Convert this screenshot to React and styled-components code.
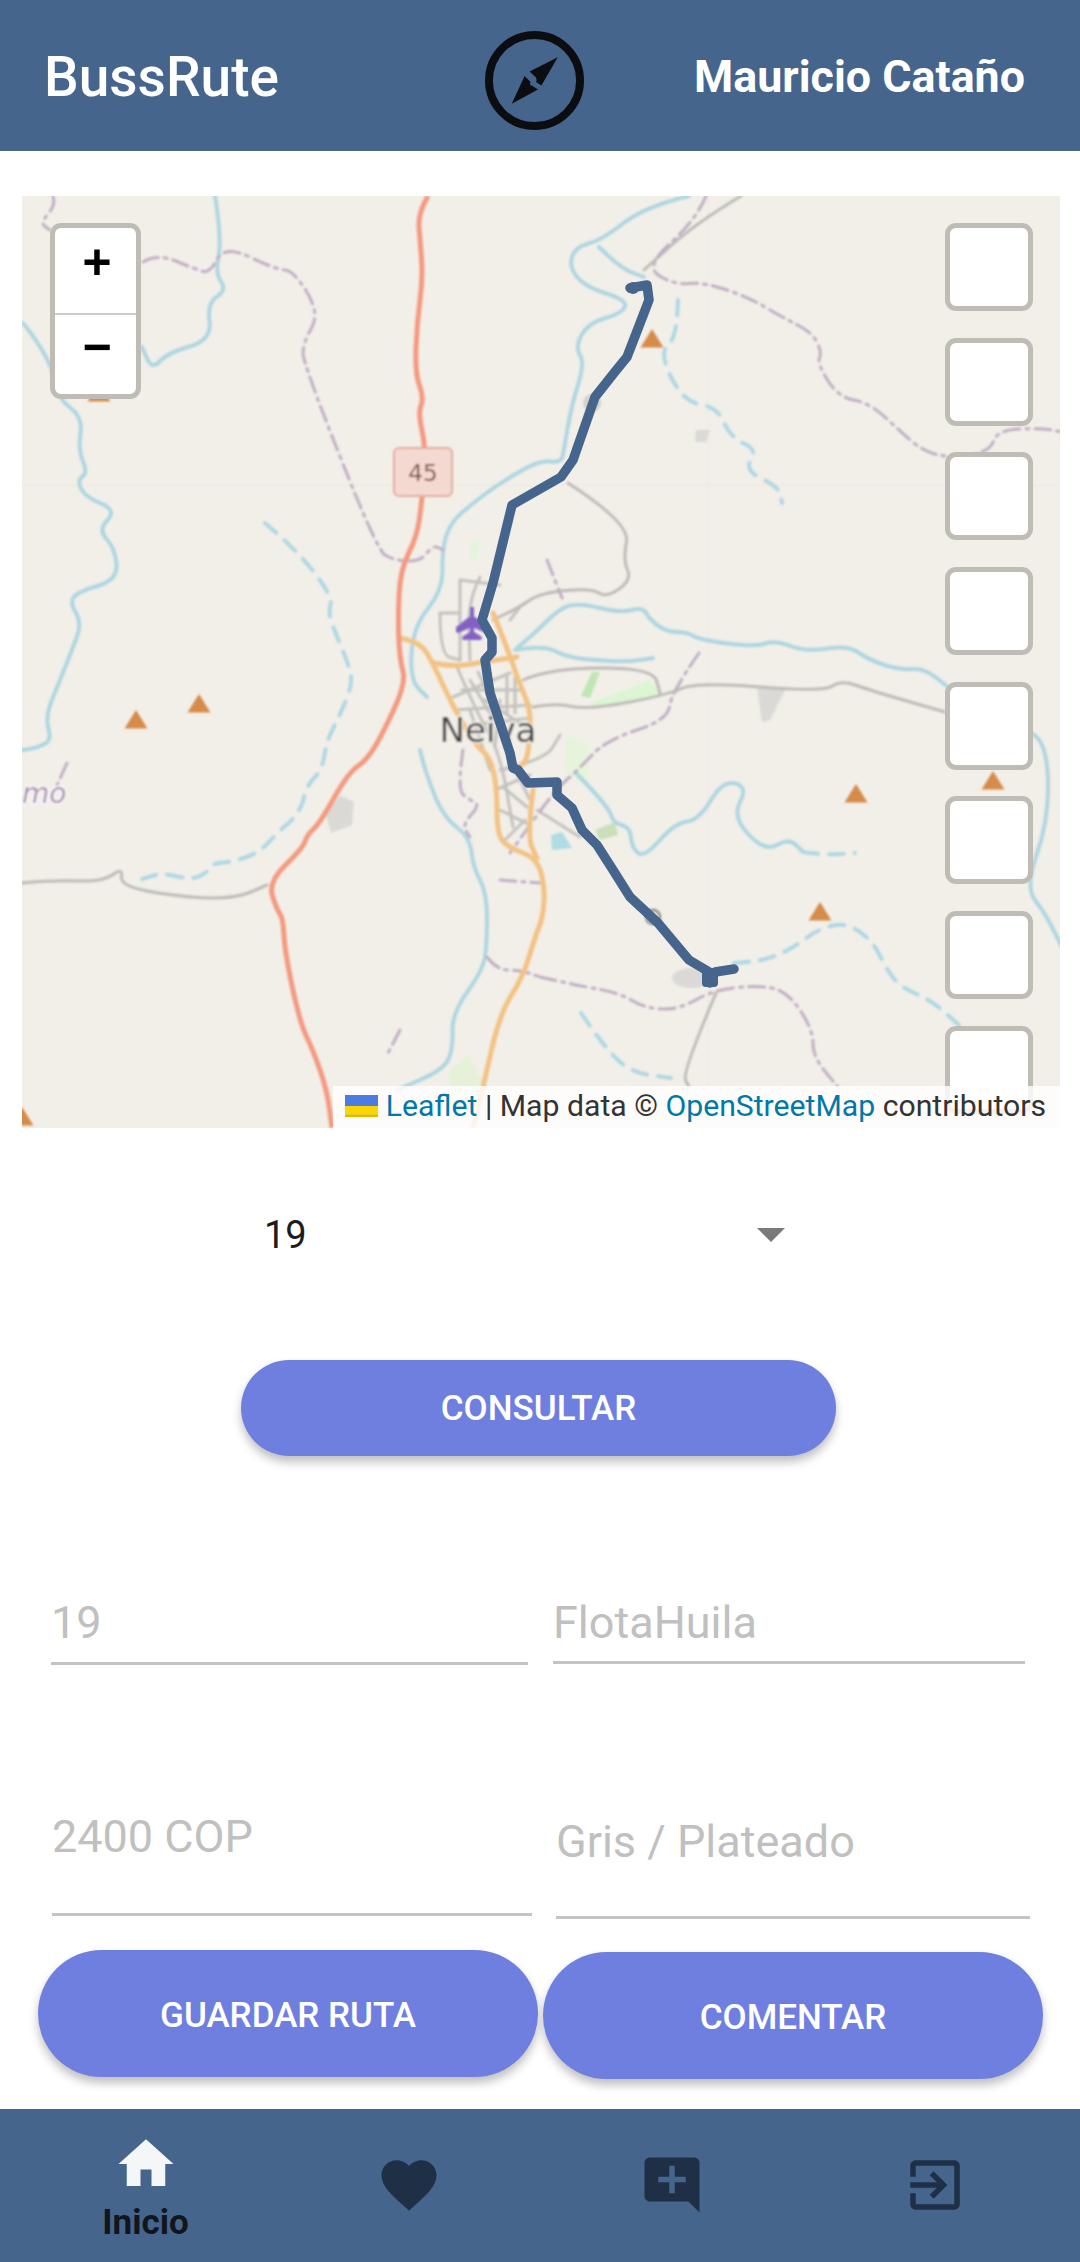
import React from 'react';
import styled, { createGlobalStyle } from 'styled-components';

const GlobalStyle = createGlobalStyle`
  html, body {
    margin: 0;
    padding: 0;
    background: #fff;
  }
  * {
    box-sizing: border-box;
  }
`;

const Page = styled.div`
  width: 1080px;
  height: 2262px;
  overflow: hidden;
  display: flex;
  flex-direction: column;
  font-family: Roboto, 'Liberation Sans', sans-serif;
  background: #fff;
`;

const Header = styled.header`
  height: 151px;
  flex: none;
  background: #46658c;
  color: #fff;
  display: grid;
  grid-template-columns: 1fr auto 1fr;
  align-items: center;
  padding: 0 55px 0 44px;
`;

const Brand = styled.div`
  font-size: 55px;
  font-weight: 500;
  margin-bottom: -3px;
`;

const UserName = styled.div`
  justify-self: end;
  font-size: 44.8px;
  font-weight: 700;
  margin-bottom: -1px;
`;

const Compass = styled.svg`
  width: 99px;
  height: 99px;
  margin-top: 10px;
`;

const MapBox = styled.div`
  position: relative;
  flex: none;
  height: 932px;
  margin: 45px 20px 0 22px;
  overflow: hidden;
  background: #f2efe9;
`;

const MapDrawing = styled.svg`
  display: block;
  width: 100%;
  height: 100%;
`;

const ZoomControl = styled.div`
  position: absolute;
  top: 27px;
  left: 28px;
  width: 91px;
  border: 5px solid #bfbcb6;
  border-radius: 11px;
  background: #fff;
  overflow: hidden;
`;

const ZoomButton = styled.div`
  height: ${(p) => p.$h}px;
  display: flex;
  justify-content: center;
  align-items: flex-start;
  padding: ${(p) => p.$pad}px 0 0 3px;
  font-family: 'Liberation Mono', monospace;
  font-weight: 700;
  font-size: 50px;
  line-height: 50px;
  color: #000;
  & + & {
    border-top: 2px solid #ccc;
  }
`;

const CheckColumn = styled.div`
  position: absolute;
  top: 27px;
  right: 27px;
  display: flex;
  flex-direction: column;
  gap: 26.7px;
`;

const CheckBox = styled.div`
  width: 88px;
  height: 88px;
  flex: none;
  border: 5px solid #bfbcb6;
  border-radius: 11px;
  background: #fff;
`;

const Attribution = styled.div`
  position: absolute;
  right: 0;
  bottom: 0;
  height: 42px;
  display: flex;
  align-items: center;
  padding: 0 14px 3px 12px;
  background: rgba(255, 255, 255, 0.8);
  color: #333;
  font-size: 30.2px;
  white-space: pre;
`;

const AttributionLink = styled.span`
  color: #0078a8;
`;

const Flag = styled.svg`
  width: 33px;
  height: 22px;
  margin-right: 8px;
`;

const SelectRow = styled.div`
  flex: none;
  height: 100px;
  margin: 57px 0 0 264px;
  width: 521px;
  display: flex;
  align-items: center;
  justify-content: space-between;
  font-size: 38px;
  color: #1c1c1c;
`;

const Caret = styled.div`
  width: 0;
  height: 0;
  border-left: 14px solid transparent;
  border-right: 14px solid transparent;
  border-top: 14px solid #7a7a7a;
`;

const PillButton = styled.div`
  flex: none;
  width: ${(p) => p.$w}px;
  height: ${(p) => p.$h}px;
  margin-top: ${(p) => p.$mt || 0}px;
  padding-top: ${(p) => p.$pt || 0}px;
  border-radius: 999px;
  background: #6f7fe0;
  color: #fff;
  font-size: 35px;
  font-weight: 500;
  display: flex;
  align-items: center;
  justify-content: center;
  box-shadow: 0 6px 10px rgba(0, 0, 0, 0.25);
`;

const CenterRow = styled.div`
  flex: none;
  margin: 75px 0 0 241px;
`;

const FieldRow = styled.div`
  flex: none;
  display: flex;
  align-items: flex-start;
  margin-top: ${(p) => p.$mt}px;
  padding-left: ${(p) => p.$pl}px;
`;

const Field = styled.div`
  width: ${(p) => p.$w}px;
  height: ${(p) => p.$h}px;
  margin-left: ${(p) => p.$ml || 0}px;
  margin-top: ${(p) => p.$mt || 0}px;
  border-bottom: 3px solid #c4c4c4;
  color: #c0c0c0;
  font-size: 45px;
  line-height: 76px;
`;

const ButtonRow = styled.div`
  flex: none;
  display: flex;
  align-items: flex-start;
  gap: 5px;
  margin: 31px 0 0 38px;
`;

const BottomNav = styled.nav`
  margin-top: auto;
  height: 153px;
  flex: none;
  background: #46658c;
  display: grid;
  grid-template-columns: repeat(4, 263px);
  padding-left: 14px;
`;

const NavItem = styled.div`
  display: flex;
  flex-direction: column;
  align-items: center;
  padding-top: ${(p) => (p.$active ? 22 : 43)}px;
  color: ${(p) => (p.$active ? '#f5f6f8' : '#1f2f45')};
`;

const NavIcon = styled.svg`
  width: 66px;
  height: 66px;
  fill: currentColor;
  flex: none;
`;

const NavLabel = styled.div`
  color: #11151c;
  font-size: 35px;
  font-weight: 700;
  line-height: 38px;
  margin-top: 7px;
`;

// map lines, in page coordinates
const trunkRoad = [[428,196],[418,213],[420,240],[423,277],[417,323],[415,373],[424,398],[418,413],[426,448],[422,500],[417,537],[400,570],[398,623],[400,660],[406,683],[383,733],[367,760],[348,773],[320,823],[307,835],[303,848],[268,882],[277,910],[283,918],[285,953],[300,1023],[313,1050],[327,1090],[332,1128]];

const primaryRoads = [
  [[400,638],[420,642],[433,663],[453,707],[477,747],[490,757],[497,787],[497,833],[507,847],[537,858],[545,887],[543,917],[535,937],[523,977],[500,1013],[483,1087],[473,1128]],
  [[433,663],[453,667],[483,662],[517,657]],
  [[493,613],[510,655],[518,680],[532,713],[528,757],[522,765]],
  [[533,790],[527,837],[537,858]],
];

const rivers = [
  [[215,196],[222,240],[215,273],[227,290],[207,303],[212,340],[167,353],[152,370],[142,347]],
  [[23,323],[50,357],[57,398],[83,417],[78,450],[88,473],[77,480],[85,497],[117,510],[98,530],[115,548],[118,580],[77,592],[70,603],[82,623],[72,650],[60,680],[45,717],[52,740],[37,748],[22,750]],
  [[689,196],[644,207],[602,240],[575,247],[569,267],[585,287],[627,300],[623,313],[588,323],[575,347],[585,363],[571,407],[564,450],[561,463],[540,460],[500,483],[473,503],[450,523],[442,550],[443,590],[413,627],[410,680],[427,697]],
  [[599,247],[620,268],[644,277]],
  [[420,750],[424,768],[443,817],[470,837],[473,867],[487,893],[487,943],[483,970],[452,1013],[453,1050],[443,1070],[397,1090]],
  [[517,648],[533,635],[560,608],[580,603],[620,613],[643,607],[650,620],[667,632],[687,632],[700,640],[755,647],[775,640],[806,652],[848,645],[869,660],[900,670],[924,668],[948,687]],
  [[1031,733],[1047,740],[1049,820],[1025,887],[1045,913],[1062,947]],
  [[515,650],[543,645],[567,657],[593,660],[627,662],[653,658]],
  [[576,773],[609,807],[613,823],[630,827],[632,848],[644,858],[675,823],[699,820],[723,780],[748,787],[732,817],[765,852],[789,838],[803,852]],
];

const dashedRivers = [
  [[265,523],[297,550],[333,597],[328,613],[337,637],[348,663],[353,683],[340,715],[327,740],[322,770],[307,785],[300,813],[277,833],[260,852],[233,862],[213,863],[208,872],[192,880],[163,873],[148,877],[140,880]],
  [[803,852],[824,855],[855,853]],
  [[734,963],[755,962],[779,955],[800,943],[817,930],[845,922],[872,940],[886,968],[900,987],[931,1000],[959,1025]],
  [[581,1013],[606,1050],[633,1073],[671,1078]],
  [[678,300],[677,337],[661,350],[671,380],[689,403],[718,408],[730,437],[758,450],[744,470],[779,487],[782,503]],
];

const boundaries = [
  [[53,196],[56,205],[40,223],[50,230]],
  [[143,262],[157,253],[197,270],[210,273],[225,245],[277,270],[293,270],[320,313],[303,343],[303,363],[377,550],[393,560],[420,562],[433,545],[443,550]],
  [[706,196],[696,220],[644,267],[675,285],[703,282],[748,297],[782,317],[813,333],[822,353],[817,363],[838,397],[869,403],[896,427],[921,450],[948,458],[990,452],[997,430],[1042,428],[1062,432]],
  [[547,560],[562,598]],
  [[699,653],[671,693],[668,720],[606,740],[578,770],[555,790],[510,853]],
  [[540,977],[575,985],[620,993],[644,1008],[678,1010],[713,990],[762,985],[789,993],[813,1030],[813,1057],[838,1087]],
  [[463,750],[457,790],[470,800],[480,805],[462,825],[470,837]],
  [[500,880],[540,883]],
  [[487,957],[497,970],[520,970],[540,977]],
  [[67,763],[57,785]],
  [[400,1030],[387,1055]],
];

const greyRoads = [
  [[741,196],[696,223],[644,270]],
  [[22,883],[53,880],[103,882],[123,867],[120,887],[190,898],[237,898],[267,885]],
  [[568,483],[630,523],[623,560],[632,580],[606,598],[592,588],[540,593],[520,607],[493,620]],
  [[523,680],[550,668],[653,668],[660,693]],
  [[533,707],[557,703],[587,710],[667,695],[696,682],[824,692],[841,680],[869,690],[945,712]],
  [[716,993],[682,1073],[689,1087]],
];

const cityStreets = [
  [[460,580],[460,660]],
  [[440,613],[440,655],[460,660]],
  [[440,613],[460,613]],
  [[457,667],[477,713],[500,753],[513,827]],
  [[480,577],[468,600],[470,660]],
  [[507,677],[507,713]],
  [[515,677],[515,713]],
  [[453,697],[510,673]],
  [[460,580],[500,585]],
  [[503,787],[527,807]],
  [[537,810],[580,837]],
  [[470,710],[490,770]],
  [[485,700],[530,730]],
  [[500,770],[545,760],[560,735]],
  [[510,620],[520,607]],
  [[505,840],[525,820]],
  [[462,690],[520,690]],
  [[470,680],[500,730]],
  [[478,672],[510,740]],
  [[455,710],[530,705]],
  [[470,725],[530,718]],
  [[500,700],[495,745]],
  [[510,760],[530,800]],
  [[495,790],[530,775]],
  [[500,810],[530,825]],
];

const triangles = [[652,329],[136,710],[199,694],[22,1107],[856,784],[993,771],[820,902],[99,383]];

const route = [[630,288],[647,285],[649,300],[627,357],[614,373],[595,397],[573,460],[561,477],[540,489],[512,505],[493,583],[482,620],[492,638],[492,652],[485,660],[490,693],[500,723],[510,753],[513,768],[518,770],[528,783],[557,782],[557,795],[572,808],[582,830],[597,845],[613,870],[630,897],[658,923],[689,960],[711,973],[710,983],[715,972],[734,969]];

const toPoints = (line) => line.map((p) => p.join(',')).join(' ');

// rounds the corners of a line through the midpoints of its segments
const toCurve = (line) => {
  let d = `M${line[0][0]} ${line[0][1]}`;
  for (let i = 1; i < line.length - 1; i++) {
    const mx = (line[i][0] + line[i + 1][0]) / 2;
    const my = (line[i][1] + line[i + 1][1]) / 2;
    d += `Q${line[i][0]} ${line[i][1]} ${mx} ${my}`;
  }
  const last = line[line.length - 1];
  return `${d}L${last[0]} ${last[1]}`;
};

const Lines = ({ lines, color, width, dash }) => (
  <g fill="none" stroke={color} strokeWidth={width} strokeLinejoin="round" strokeLinecap="round" strokeDasharray={dash}>
    {lines.map((line, i) => (
      <path key={i} d={toCurve(line)} />
    ))}
  </g>
);

const MapArt = () => (
  <MapDrawing viewBox="22 196 1038 932">
    <defs>
      <filter id="soft" x="-2%" y="-2%" width="104%" height="104%">
        <feGaussianBlur stdDeviation="1.1" />
      </filter>
    </defs>
    <g filter="url(#soft)">
      <path d="M22 485H1060M708 196V1128" stroke="#eae7e1" strokeWidth="1" fill="none" />
      <path d="M590 703L650 680L662 695L600 708Z" fill="#dcf6d4" />
      <path d="M592 672L600 672L590 698L581 696Z" fill="#bfe6b4" />
      <path d="M566 735L590 745L588 790L565 770Z" fill="#e6f4dc" />
      <path d="M448 1072L468 1055L485 1085L450 1088Z" fill="#e6f1d8" />
      <path d="M595 830L615 822L618 835L600 840Z" fill="#c8e0b8" />
      <path d="M551 835L562 832L572 848L552 850Z" fill="#b0dce4" />
      <path d="M470 540L480 540L478 560L470 560Z" fill="#e6f4dc" />
      <path d="M340 795L354 802L352 825L331 833L326 815Z" fill="#dbd9d6" />
      <path d="M757 687L785 690L770 720L762 722Z" fill="#dbd9d6" />
      <path d="M696 430L710 430L706 442L695 442Z" fill="#dbd9d6" />
      <ellipse cx="692" cy="978" rx="20" ry="10" fill="#dbd9d6" />
      <circle cx="592" cy="403" r="9" fill="#d3d1cd" />
      <circle cx="653" cy="917" r="7" fill="none" stroke="#8a8a86" strokeWidth="2.5" />
      <Lines lines={cityStreets} color="#c4c2be" width={3} />
      <Lines lines={greyRoads} color="#bdbbb7" width={3} />
      <Lines lines={rivers} color="#aed6e1" width={4} />
      <Lines lines={dashedRivers} color="#aed8e3" width={4} dash="15 11" />
      <Lines lines={boundaries} color="#c0afc4" width={3} dash="16 6 3 6" />
      <Lines lines={primaryRoads} color="#f3c283" width={5} />
      <path d={toCurve(trunkRoad)} fill="none" stroke="#f4997f" strokeWidth="5" strokeLinejoin="round" />
      {triangles.map(([x, y]) => (
        <path key={`${x}-${y}`} d={`M${x} ${y}l11.5 18.5h-23z`} fill="#d58b48" />
      ))}
      <rect x="394" y="448" width="58" height="48" rx="5" fill="#f4d9d1" stroke="#e3aa9b" strokeWidth="2" />
      <text x="423" y="481" textAnchor="middle" fontFamily="'DejaVu Sans', sans-serif" fontSize="23" fill="#7a4c42">45</text>
      <path d="M472 607v30M458 628L472 617L486 628L486 631L472 625L458 631ZM464 638L472 633L480 638Z" fill="#8461c4" stroke="#8461c4" strokeWidth="4" strokeLinejoin="round" />
      <text x="488" y="742" textAnchor="middle" fontFamily="'DejaVu Sans', sans-serif" fontSize="34" fill="#3c3c3c" stroke="#f2efe9" strokeWidth="3" paintOrder="stroke">Neiva</text>
      <text x="22" y="803" fontFamily="'DejaVu Sans', sans-serif" fontStyle="italic" fontSize="28" fill="#a78dab" stroke="#fbf9fb" strokeWidth="3" paintOrder="stroke">mo</text>
    </g>
    <polyline points={toPoints(route)} fill="none" stroke="#46658c" strokeWidth="9.5" strokeLinejoin="round" strokeLinecap="round" />
    <circle cx="633" cy="288" r="6" fill="#46658c" />
    <rect x="702" y="970" width="16" height="17" rx="4" fill="#46658c" />
  </MapDrawing>
);

const App = () => (
  <Page>
    <GlobalStyle />
    <Header>
      <Brand>BussRute</Brand>
      <Compass viewBox="0 0 100 100">
        <circle cx="50" cy="50" r="46" fill="none" stroke="#0c0d10" strokeWidth="8" />
        <path d="M73.5 26.5L45 41L51 46.5Q53 50 51.5 51.5L57 55Z" fill="#0c0d10" />
        <path d="M27 73.5L40 45.5L46 51.5Q44 54 48 55.5L53.5 59Z" fill="#0c0d10" />
      </Compass>
      <UserName>Mauricio Cataño</UserName>
    </Header>

    <MapBox>
      <MapArt />
      <CheckColumn>
        {Array.from({ length: 8 }).map((_, i) => (
          <CheckBox key={i} />
        ))}
      </CheckColumn>
      <ZoomControl>
        <ZoomButton $h={85} $pad={13}>+</ZoomButton>
        <ZoomButton $h={81} $pad={11}>−</ZoomButton>
      </ZoomControl>
      <Attribution>
        <Flag viewBox="0 0 12 8">
          <path fill="#4C7BE1" d="M0 0h12v4H0z" />
          <path fill="#FFD500" d="M0 4h12v3H0z" />
          <path fill="#E0BC00" d="M0 7h12v1H0z" />
        </Flag>
        <AttributionLink>Leaflet</AttributionLink>
        {' | Map data © '}
        <AttributionLink>OpenStreetMap</AttributionLink>
        {' contributors'}
      </Attribution>
    </MapBox>

    <SelectRow>
      <span>19</span>
      <Caret />
    </SelectRow>

    <CenterRow>
      <PillButton $w={595} $h={96}>CONSULTAR</PillButton>
    </CenterRow>

    <FieldRow $mt={129} $pl={51}>
      <Field $w={477} $h={80}>19</Field>
      <Field $w={472} $h={79} $ml={25}>FlotaHuila</Field>
    </FieldRow>

    <FieldRow $mt={134} $pl={52}>
      <Field $w={480} $h={117}>2400 COP</Field>
      <Field $w={474} $h={115} $ml={24} $mt={5}>Gris / Plateado</Field>
    </FieldRow>

    <ButtonRow>
      <PillButton $w={500} $h={127} $pt={3}>GUARDAR RUTA</PillButton>
      <PillButton $w={500} $h={127} $pt={3} $mt={2}>COMENTAR</PillButton>
    </ButtonRow>

    <BottomNav>
      <NavItem $active>
        <NavIcon viewBox="0 0 24 24">
          <path d="M10 20v-6h4v6h5v-8h3L12 3 2 12h3v8z" />
        </NavIcon>
        <NavLabel>Inicio</NavLabel>
      </NavItem>
      <NavItem>
        <NavIcon viewBox="0 0 24 24">
          <path d="M12 21.35l-1.45-1.32C5.4 15.36 2 12.28 2 8.5 2 5.42 4.42 3 7.5 3c1.74 0 3.41.81 4.5 2.09C13.09 3.81 14.76 3 16.5 3 19.58 3 22 5.42 22 8.5c0 3.78-3.4 6.86-8.55 11.54L12 21.35z" />
        </NavIcon>
      </NavItem>
      <NavItem>
        <NavIcon viewBox="0 0 24 24">
          <path d="M22 4c0-1.1-.9-2-2-2H4c-1.1 0-2 .9-2 2v12c0 1.1.9 2 2 2h14l4 4V4zm-5 7h-4v4h-2v-4H7V9h4V5h2v4h4v2z" />
        </NavIcon>
      </NavItem>
      <NavItem>
        <NavIcon viewBox="0 0 24 24">
          <path d="M10.09 15.59L11.5 17l5-5-5-5-1.41 1.41L12.67 11H3v2h9.67l-2.58 2.59zM19 3H5c-1.11 0-2 .9-2 2v4h2V5h14v14H5v-4H3v4c0 1.1.89 2 2 2h14c1.1 0 2-.9 2-2V5c0-1.1-.9-2-2-2z" />
        </NavIcon>
      </NavItem>
    </BottomNav>
  </Page>
);

export default App;
